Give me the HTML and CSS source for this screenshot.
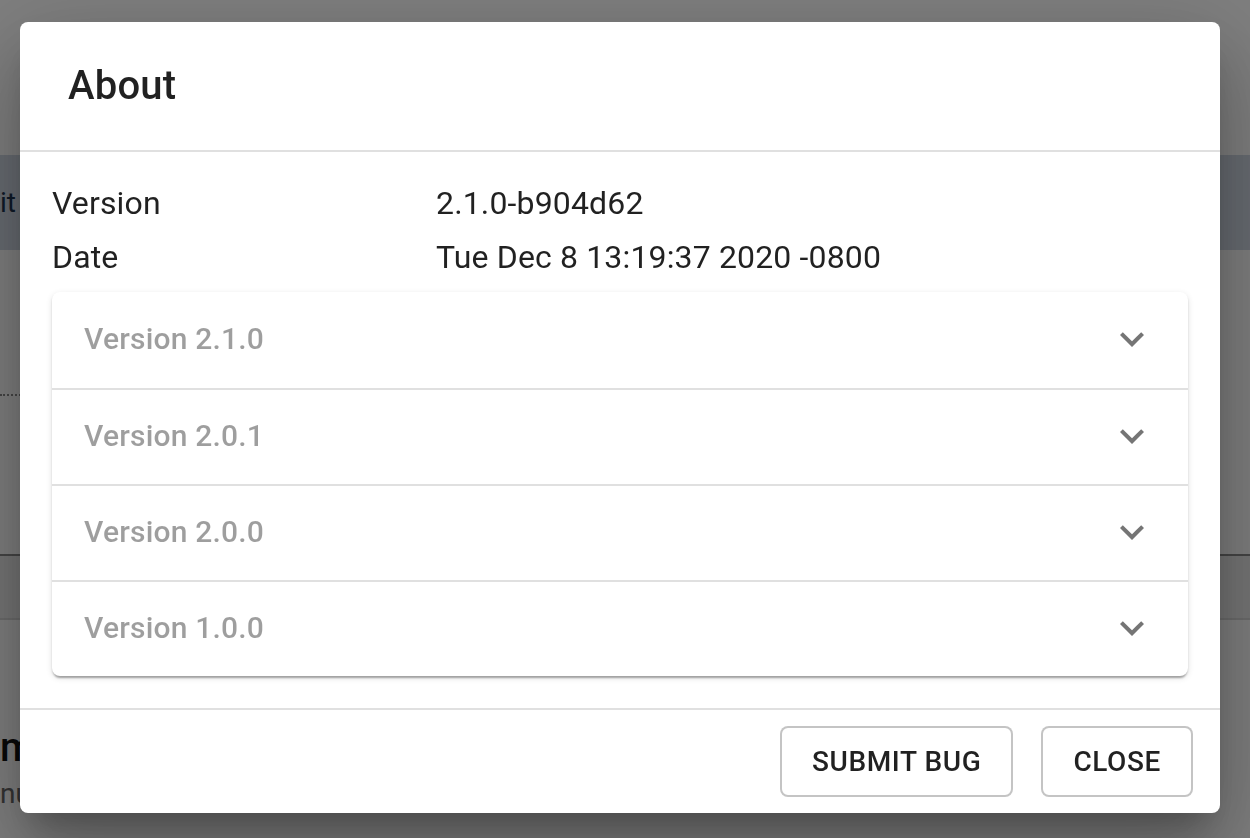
FILE: index.html
```html
<!DOCTYPE html>
<html lang="en">
<head>
<meta charset="utf-8">
<title>About</title>
<link rel="stylesheet" href="styles.css">
</head>
<body>
<div class="page">
  <div class="page-top"></div>
  <div class="page-band">it</div>
  <div class="page-gap"></div>
  <div class="page-dots"></div>
  <div class="page-gap2"></div>
  <div class="page-strip"></div>
  <div class="page-gap3"></div>
  <div class="page-title">m</div>
  <div class="page-sub">nu</div>
</div>

<div class="backdrop">
  <div class="dialog" role="dialog" aria-labelledby="about-title">
    <h2 class="dialog-title" id="about-title">About</h2>
    <div class="dialog-content">
      <div class="info">
        <div class="info-label">Version</div>
        <div class="info-value">2.1.0-b904d62</div>
        <div class="info-label">Date</div>
        <div class="info-value">Tue Dec 8 13:19:37 2020 -0800</div>
      </div>
      <div class="accordion">
        <div class="acc-row">
          <span class="acc-heading">Version 2.1.0</span>
          <svg class="acc-icon" viewBox="0 0 24 24"><path d="M16.59 8.59L12 13.17 7.41 8.59 6 10l6 6 6-6z"/></svg>
        </div>
        <div class="acc-row">
          <span class="acc-heading">Version 2.0.1</span>
          <svg class="acc-icon" viewBox="0 0 24 24"><path d="M16.59 8.59L12 13.17 7.41 8.59 6 10l6 6 6-6z"/></svg>
        </div>
        <div class="acc-row">
          <span class="acc-heading">Version 2.0.0</span>
          <svg class="acc-icon" viewBox="0 0 24 24"><path d="M16.59 8.59L12 13.17 7.41 8.59 6 10l6 6 6-6z"/></svg>
        </div>
        <div class="acc-row">
          <span class="acc-heading">Version 1.0.0</span>
          <svg class="acc-icon" viewBox="0 0 24 24"><path d="M16.59 8.59L12 13.17 7.41 8.59 6 10l6 6 6-6z"/></svg>
        </div>
      </div>
    </div>
    <div class="dialog-actions">
      <button class="btn">Submit Bug</button>
      <button class="btn">Close</button>
    </div>
  </div>
</div>
</body>
</html>
```

FILE: styles.css
```css
* { box-sizing: border-box; }

html, body {
  margin: 0;
  padding: 0;
  background: #ffffff;
  font-family: Roboto, "Liberation Sans", Arial, sans-serif;
}

.page {
  width: 1250px;
  height: 838px;
  overflow: hidden;
}

.page-top { height: 155px; }

.page-band {
  height: 95px;
  background: #d0d8e4;
  color: #1c3350;
  font-size: 28px;
  line-height: 95px;
}

.page-gap { height: 144px; }

.page-dots {
  width: 400px;
  border-bottom: 2px dotted #8a8a8a;
}

.page-gap2 { height: 158px; }

.page-strip {
  height: 66px;
  background: #ececec;
  border-top: 2px solid #8c8c8c;
  border-bottom: 2px solid #d8d8d8;
}

.page-gap3 { height: 104px; }

.page-title {
  font-size: 40px;
  font-weight: 500;
  color: #111;
  line-height: 48px;
}

.page-sub {
  font-size: 28px;
  color: #666;
  line-height: 40px;
  margin-top: 2px;
}

.backdrop {
  position: fixed;
  inset: 0;
  background: rgba(0, 0, 0, 0.5);
  display: flex;
  justify-content: flex-start;
  align-items: flex-start;
  padding: 22px 30px 0 20px;
}

.dialog {
  width: 1200px;
  background: #ffffff;
  border-radius: 8px;
  box-shadow: 0 22px 30px -14px rgba(0,0,0,0.24),
              0 48px 76px 6px rgba(0,0,0,0.18),
              0 18px 92px 16px rgba(0,0,0,0.14);
  display: flex;
  flex-direction: column;
  color: rgba(0, 0, 0, 0.87);
}

.dialog-title {
  margin: 0;
  padding: 32px 48px;
  font-size: 40px;
  font-weight: 500;
  line-height: 64px;
  letter-spacing: 0.2px;
  color: rgba(0, 0, 0, 0.87);
}

.dialog-content {
  border-top: 2px solid #e0e0e0;
  border-bottom: 2px solid #e0e0e0;
  padding: 24px 32px 32px;
}

.info {
  display: grid;
  grid-template-columns: 384px 1fr;
  font-size: 32px;
  line-height: 54px;
  letter-spacing: 0.15px;
  margin-bottom: 8px;
}

.accordion {
  border-radius: 8px;
  background: #fff;
  box-shadow: 0 4px 2px -2px rgba(0,0,0,0.2),
              0 2px 2px 0 rgba(0,0,0,0.14),
              0 2px 6px 0 rgba(0,0,0,0.12);
  display: flex;
  flex-direction: column;
}

.acc-row {
  height: 96px;
  padding: 0 32px;
  display: flex;
  align-items: center;
  justify-content: space-between;
  border-top: 2px solid #e0e0e0;
}

.acc-row:first-child {
  border-top: none;
}

.acc-heading {
  font-size: 30px;
  font-weight: 500;
  color: rgba(0, 0, 0, 0.38);
  letter-spacing: 0.2px;
  margin-top: -3px;
}

.acc-icon {
  width: 48px;
  height: 48px;
  fill: rgba(0, 0, 0, 0.54);
  margin-top: -2px;
}

.dialog-actions {
  display: flex;
  justify-content: flex-end;
  gap: 28px;
  padding: 16px 27px 16px;
}

.btn {
  font-family: Roboto, "Liberation Sans", Arial, sans-serif;
  font-size: 28px;
  font-weight: 500;
  text-transform: uppercase;
  letter-spacing: 0.6px;
  line-height: 47px;
  padding: 10px 30px;
  min-width: 128px;
  background: #fff;
  color: rgba(0, 0, 0, 0.87);
  border: 2px solid rgba(0, 0, 0, 0.23);
  border-radius: 8px;
}
```
